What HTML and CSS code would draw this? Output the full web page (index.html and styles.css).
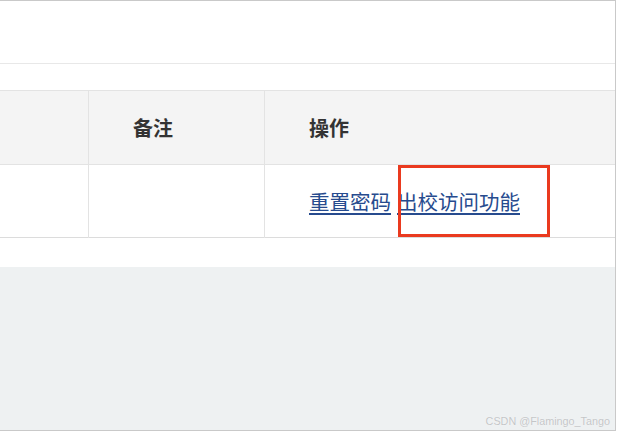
FILE: index.html
```html
<!DOCTYPE html>
<html lang="zh-CN">
<head>
<meta charset="utf-8">
<title>用户管理</title>
<link rel="stylesheet" href="styles.css">
</head>
<body>
<div class="frame">
  <div class="panel">
    <div class="toolbar"></div>
    <div class="strip"></div>
    <table class="grid">
      <thead>
        <tr>
          <th class="c1"></th>
          <th class="c2">备注</th>
          <th class="c3">操作</th>
        </tr>
      </thead>
      <tbody>
        <tr>
          <td class="c1"></td>
          <td class="c2"></td>
          <td class="c3">
            <div class="ops">
              <a href="#" class="op">重置密码</a> <a href="#" class="op op-second">出校访问功能</a>
              <span class="mark"></span>
            </div>
          </td>
        </tr>
      </tbody>
    </table>
    <div class="footer-gap"></div>
  </div>
  <div class="backdrop">
    <span class="watermark">CSDN @Flamingo_Tango</span>
  </div>
</div>
</body>
</html>
```

FILE: styles.css
```css
html, body {
  margin: 0;
  padding: 0;
  background: #ffffff;
}

body {
  font-family: "Noto Sans CJK SC", "Noto Sans", "Liberation Sans", sans-serif;
  color: #333333;
}

.frame {
  width: 615px;
  height: 429px;
  border-top: 1px solid #c9c9c9;
  border-right: 1px solid #c9c9c9;
  border-bottom: 1px solid #c9c9c9;
  display: flex;
  flex-direction: column;
  overflow: hidden;
}

.panel {
  background: #ffffff;
  display: flex;
  flex-direction: column;
}

.toolbar {
  height: 62px;
  border-bottom: 1px solid #e8e8e8;
}

.strip {
  height: 26px;
}

.grid {
  width: 100%;
  border-collapse: collapse;
  table-layout: fixed;
}

.grid th,
.grid td {
  padding: 0 0 0 44px;
  text-align: left;
  vertical-align: middle;
  border-left: 1px solid #e3e3e3;
}

.grid th.c1,
.grid td.c1 {
  border-left: none;
  width: 44px;
}

.grid th.c2,
.grid td.c2 {
  width: 131px;
}

.grid thead tr {
  background: #f4f4f4;
  border-top: 1px solid #e3e3e3;
  border-bottom: 1px solid #e3e3e3;
}

.grid th {
  height: 73px;
  font-size: 20px;
  font-weight: bold;
  color: #333333;
  line-height: 1;
}

.grid tbody tr {
  border-bottom: 1px solid #dcdcdc;
}

.grid td {
  height: 72px;
}

.ops {
  position: relative;
  height: 72px;
  display: flex;
  align-items: center;
  font-size: 20.5px;
  line-height: 1;
}

.op {
  color: #274b8e;
  text-decoration: underline;
  text-underline-offset: 3px;
}

.op-second {
  margin-left: 6px;
}

.mark {
  position: absolute;
  left: 89px;
  top: 0;
  width: 152px;
  height: 72px;
  box-sizing: border-box;
  border: 3px solid #ea3a1f;
}

.footer-gap {
  height: 29px;
}

.backdrop {
  flex: 1;
  background: #eef1f2;
  display: flex;
  justify-content: flex-end;
  align-items: flex-end;
  padding: 0 5px 3px 0;
}

.watermark {
  font-family: "Liberation Sans", Arial, sans-serif;
  font-size: 10.8px;
  color: #c4c6c8;
  text-shadow: 0 0 1px #ffffff;
}
```
